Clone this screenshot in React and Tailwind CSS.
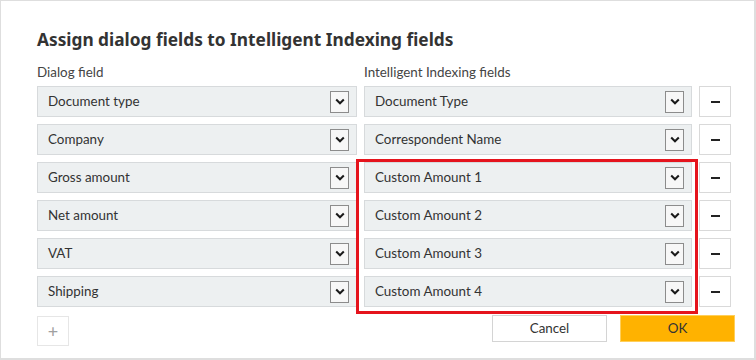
import { useState } from 'react';

const rows = [
  { dialog: 'Document type', index: 'Document Type' },
  { dialog: 'Company', index: 'Correspondent Name' },
  { dialog: 'Gross amount', index: 'Custom Amount 1' },
  { dialog: 'Net amount', index: 'Custom Amount 2' },
  { dialog: 'VAT', index: 'Custom Amount 3' },
  { dialog: 'Shipping', index: 'Custom Amount 4' },
];

function Chevron() {
  return (
    <span className="w-[19px] h-[22px] border border-[#8c8c8c] bg-[#f7f7f7] flex items-center justify-center">
      <svg width="10" height="7" viewBox="0 0 10 7" fill="none">
        <path d="M1.2 1.5 L5 5.3 L8.8 1.5" stroke="#1a1a1a" strokeWidth="2" />
      </svg>
    </span>
  );
}

function Select({ value }) {
  return (
    <div className="h-[31px] bg-[#edf0f1] border border-[#d7dadc] flex items-center justify-between pl-[10px] pr-[7px]">
      <span className="text-[13.4px] text-[#333]">{value}</span>
      <Chevron />
    </div>
  );
}

export default function App() {
  const [fields] = useState(rows);

  return (
    <div
      className="relative w-[756px] h-[360px] bg-white border border-r-2 border-b-2 border-[#dedede] pl-[36px] pt-[27px]"
      style={{ fontFamily: 'Lato, "Noto Sans", "Liberation Sans", sans-serif' }}
    >
      {/* title */}
      <h1
        className="text-[17.3px] font-bold text-[#333] leading-[24px]"
        style={{ fontFamily: '"Noto Sans", "Liberation Sans", sans-serif' }}
      >
        Assign dialog fields to Intelligent Indexing fields
      </h1>

      {/* column labels */}
      <div className="grid grid-cols-[320px_328px] gap-x-[7px] mt-[10px] text-[13.4px] text-[#444] leading-[20px]">
        <div>Dialog field</div>
        <div>Intelligent Indexing fields</div>
      </div>

      {/* mapping rows */}
      <div className="flex flex-col gap-[7px] mt-[4px]">
        {fields.map(f => (
          <div key={f.dialog} className="grid grid-cols-[320px_328px_32px] gap-x-[7px]">
            <Select value={f.dialog} />
            <Select value={f.index} />
            <button className="h-[31px] bg-white border border-[#d9d9d9] flex items-center justify-center">
              <span className="block w-[9px] h-[2px] bg-[#222]" />
            </button>
          </div>
        ))}
      </div>

      {/* footer */}
      <div className="flex items-start mt-[8px] pr-[19px]">
        <button className="w-[32px] h-[30px] mt-[1px] bg-white border border-[#e6e6e6] flex items-center justify-center text-[#a0a0a0] text-[18px] leading-none">
          +
        </button>
        <div className="ml-auto flex gap-[13px]">
          <button className="w-[115px] h-[27px] bg-white border border-[#d4d4d4] text-[13.4px] text-[#333]">Cancel</button>
          <button className="w-[115px] h-[27px] bg-[#ffb200] border border-[#ffcf5a] text-[13.4px] text-[#333]">OK</button>
        </div>
      </div>

      {/* highlight annotation */}
      <div className="absolute left-[355px] top-[158px] w-[342px] h-[155px] border-[3px] border-[#e5141d] pointer-events-none" />
    </div>
  );
}
